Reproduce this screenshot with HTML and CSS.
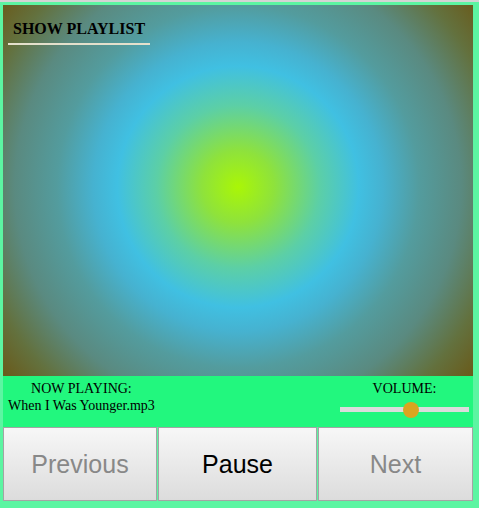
FILE: index.html
```html
<!DOCTYPE html>
<html lang="en">
<head>
<meta charset="utf-8">
<title>Player</title>
<link rel="stylesheet" href="styles.css">
</head>
<body>
<div class="player">
  <div class="visualizer">
    <button class="playlist-toggle">SHOW PLAYLIST</button>
  </div>
  <div class="info-bar">
    <div class="now-playing">
      <div class="label">NOW PLAYING:</div>
      <div class="track">When I Was Younger.mp3</div>
    </div>
    <div class="volume">
      <div class="label">VOLUME:</div>
      <input class="volume-slider" type="range" min="0" max="100" value="56">
    </div>
  </div>
  <div class="controls">
    <button class="ctrl ctrl-prev">Previous</button>
    <button class="ctrl ctrl-pause">Pause</button>
    <button class="ctrl ctrl-next">Next</button>
  </div>
</div>
</body>
</html>
```

FILE: styles.css
```css
html, body {
  margin: 0;
  padding: 0;
}
body {
  background: #5cf5a2;
  border-top: 2px solid #d4d4d4;
  padding: 3px 3px 0 3px;
  height: 506px;
  box-sizing: border-box;
  font-family: "Liberation Serif", "Times New Roman", serif;
}
.player {
  width: 470px;
}
.visualizer {
  height: 371px;
  box-sizing: border-box;
  padding: 10px 0 0 5px;
  background: radial-gradient(circle farthest-corner at 50% 49%, #aaf606 0%, #8ee23c 12%, #5ccfa6 27%, #40c0e2 40%, #46b2d0 48%, #539c9e 60%, #5a8a80 74%, #63713e 88%, #6a5a1a 100%);
}
.playlist-toggle {
  display: block;
  background: transparent;
  border: none;
  border-bottom: 2px solid #e4e0cc;
  padding: 5px 5px 5px 5px;
  margin: 0;
  font-family: "Liberation Serif", "Times New Roman", serif;
  font-weight: bold;
  font-size: 16px;
  line-height: 18px;
  color: #000;
  cursor: pointer;
}
.info-bar {
  height: 51px;
  box-sizing: border-box;
  background: #22f77e;
  display: flex;
  justify-content: space-between;
  align-items: flex-start;
  padding: 4px 4px 0 5px;
  font-size: 14px;
  line-height: 17px;
  color: #000;
}
.now-playing {
  text-align: center;
}
.volume {
  width: 129px;
  text-align: center;
}
.volume-slider {
  -webkit-appearance: none;
  appearance: none;
  display: block;
  width: 129px;
  height: 5px;
  margin: 10px 0 0 0;
  padding: 0;
  background: #dcdcdc;
  border: none;
  outline: none;
}
.volume-slider::-webkit-slider-thumb {
  -webkit-appearance: none;
  appearance: none;
  width: 16px;
  height: 16px;
  border-radius: 50%;
  background: #daa520;
  border: none;
}
.controls {
  display: flex;
  gap: 1px;
}
.ctrl {
  height: 74px;
  box-sizing: border-box;
  margin: 0;
  border: 1px solid #a4a4a4;
  background: linear-gradient(to bottom, #f7f7f7, #dcdcdc);
  font-family: "Liberation Sans", Arial, sans-serif;
  font-size: 25px;
  color: #888;
  cursor: pointer;
  padding: 0;
}
.ctrl-prev { width: 154px; }
.ctrl-pause { width: 159px; color: #000; }
.ctrl-next { width: 155px; }
```
